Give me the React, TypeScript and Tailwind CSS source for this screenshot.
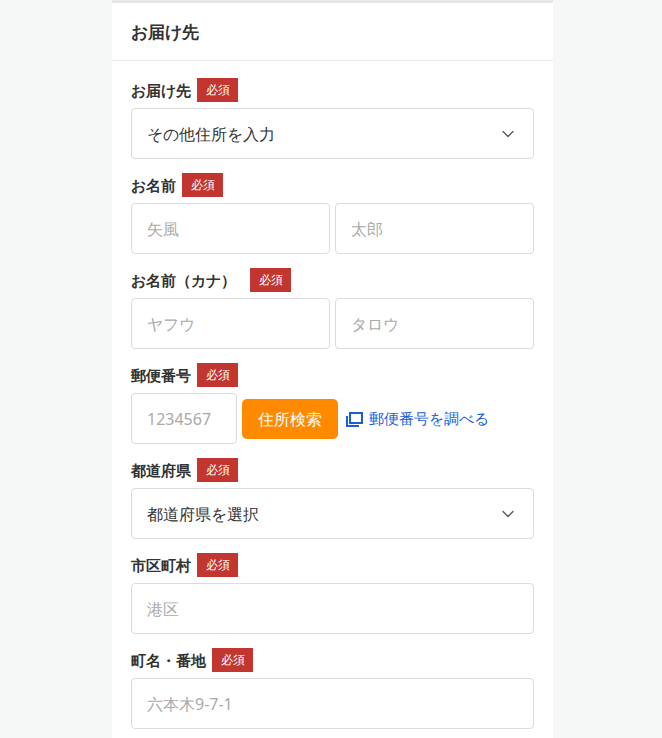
import { ChevronDown } from 'lucide-react';

const font = "font-['Noto_Sans_CJK_JP','Noto_Sans',sans-serif]";

function Badge() {
  return <span className="ml-[6px] inline-flex h-[24px] w-[41px] items-center justify-center bg-[#c2362f] text-[12px] font-normal text-white">必須</span>;
}

function Label({ text, wide }: { text: string; wide?: boolean }) {
  return (
    <div className="flex h-[28px] items-center text-[15px] font-bold text-[#333]">
      <span className={wide ? 'mr-[8px]' : ''}>{text}</span>
      <Badge />
    </div>
  );
}

const box = 'flex h-[51px] items-center rounded-[4px] border border-[#dcdcdc] bg-white px-[15px] text-[16px]';

function Select({ value }: { value: string }) {
  return (
    <div className={`${box} justify-between text-[#333]`}>
      <span>{value}</span>
      <ChevronDown size={20} strokeWidth={1.5} className="text-[#555]" />
    </div>
  );
}

function Input({ ph, className = '' }: { ph: string; className?: string }) {
  return <div className={`${box} text-[#aaa] ${className}`}>{ph}</div>;
}

export default function App() {
  return (
    <div className={`${font} flex min-h-[738px] bg-[#f6f7f7] pl-[112px]`}>
      <div className="w-[441px] border-t-[3px] border-[#e5e6e6] bg-white">
        <div className="flex h-[58px] items-center border-b border-[#ececec] px-[19px] text-[17px] font-bold text-[#333]">お届け先</div>
        <div className="flex flex-col gap-[12px] px-[19px] pt-[15px]">
          <div className="flex flex-col gap-[4px]">
            <Label text="お届け先" />
            <Select value="その他住所を入力" />
          </div>
          <div className="flex flex-col gap-[4px]">
            <Label text="お名前" />
            <div className="flex gap-[5px]">
              <Input ph="矢風" className="flex-1" />
              <Input ph="太郎" className="flex-1" />
            </div>
          </div>
          <div className="flex flex-col gap-[4px]">
            <Label text="お名前（カナ）" wide />
            <div className="flex gap-[5px]">
              <Input ph="ヤフウ" className="flex-1" />
              <Input ph="タロウ" className="flex-1" />
            </div>
          </div>
          <div className="flex flex-col gap-[4px]">
            <Label text="郵便番号" />
            <div className="flex items-center gap-[5px]">
              <Input ph="1234567" className="w-[106px]" />
              <button className="h-[40px] rounded-[5px] bg-[#ff8a00] px-[16px] text-[16px] text-white">住所検索</button>
              <a className="ml-[2px] flex items-center gap-[6px] text-[15px] text-[#1b5fd6]">
                <svg width="18" height="16" viewBox="0 0 18 16" fill="none" stroke="#1b5fd6" strokeWidth="2">
                  <rect x="5" y="2" width="12" height="10" />
                  <path d="M2 5v10h12" />
                </svg>
                郵便番号を調べる
              </a>
            </div>
          </div>
          <div className="flex flex-col gap-[4px]">
            <Label text="都道府県" />
            <Select value="都道府県を選択" />
          </div>
          <div className="flex flex-col gap-[4px]">
            <Label text="市区町村" />
            <Input ph="港区" />
          </div>
          <div className="flex flex-col gap-[4px]">
            <Label text="町名・番地" />
            <Input ph="六本木9-7-1" />
          </div>
        </div>
      </div>
    </div>
  );
}
